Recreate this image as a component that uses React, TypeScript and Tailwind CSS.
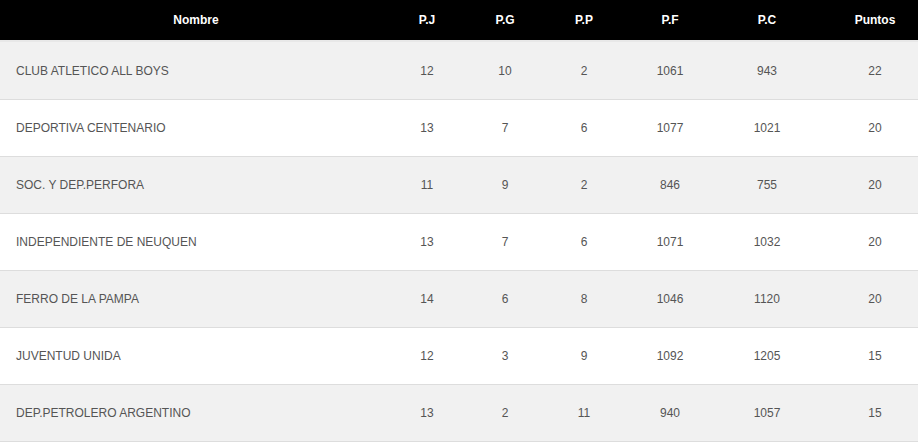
const rows = [
  { name: "CLUB ATLETICO ALL BOYS", pj: 12, pg: 10, pp: 2, pf: 1061, pc: 943, pts: 22 },
  { name: "DEPORTIVA CENTENARIO", pj: 13, pg: 7, pp: 6, pf: 1077, pc: 1021, pts: 20 },
  { name: "SOC. Y DEP.PERFORA", pj: 11, pg: 9, pp: 2, pf: 846, pc: 755, pts: 20 },
  { name: "INDEPENDIENTE DE NEUQUEN", pj: 13, pg: 7, pp: 6, pf: 1071, pc: 1032, pts: 20 },
  { name: "FERRO DE LA PAMPA", pj: 14, pg: 6, pp: 8, pf: 1046, pc: 1120, pts: 20 },
  { name: "JUVENTUD UNIDA", pj: 12, pg: 3, pp: 9, pf: 1092, pc: 1205, pts: 15 },
  { name: "DEP.PETROLERO ARGENTINO", pj: 13, pg: 2, pp: 11, pf: 940, pc: 1057, pts: 15 },
];

const cols = "grid grid-cols-[392px_70px_86px_72px_100px_94px_104px]";

export default function App() {
  return (
    <div
      className="w-[918px] h-[446px] bg-white text-[12px] overflow-hidden"
      style={{ fontFamily: '"Liberation Sans", Arial, sans-serif' }}
    >
      <div className={`${cols} h-10 items-center bg-black text-white font-bold text-center`}>
        <div>Nombre</div>
        <div>P.J</div>
        <div>P.G</div>
        <div>P.P</div>
        <div>P.F</div>
        <div>P.C</div>
        <div className="pl-[18px]">Puntos</div>
      </div>
      {rows.map((r, i) => (
        <div
          key={r.name}
          className={`${cols} items-center text-center text-[#555] ${
            i === 0
              ? "h-[59px] border-t-2 border-[#e8e8e8]"
              : "h-[57px] border-t border-[#dddddd]"
          } ${i % 2 === 0 ? "bg-[#f1f1f1]" : "bg-white"} ${
            i === rows.length - 1 ? "border-b border-b-[#dddddd] h-[58px]" : ""
          }`}
        >
          <div className="text-left pl-4">{r.name}</div>
          <div>{r.pj}</div>
          <div>{r.pg}</div>
          <div>{r.pp}</div>
          <div>{r.pf}</div>
          <div>{r.pc}</div>
          <div className="pl-[18px]">{r.pts}</div>
        </div>
      ))}
    </div>
  );
}
